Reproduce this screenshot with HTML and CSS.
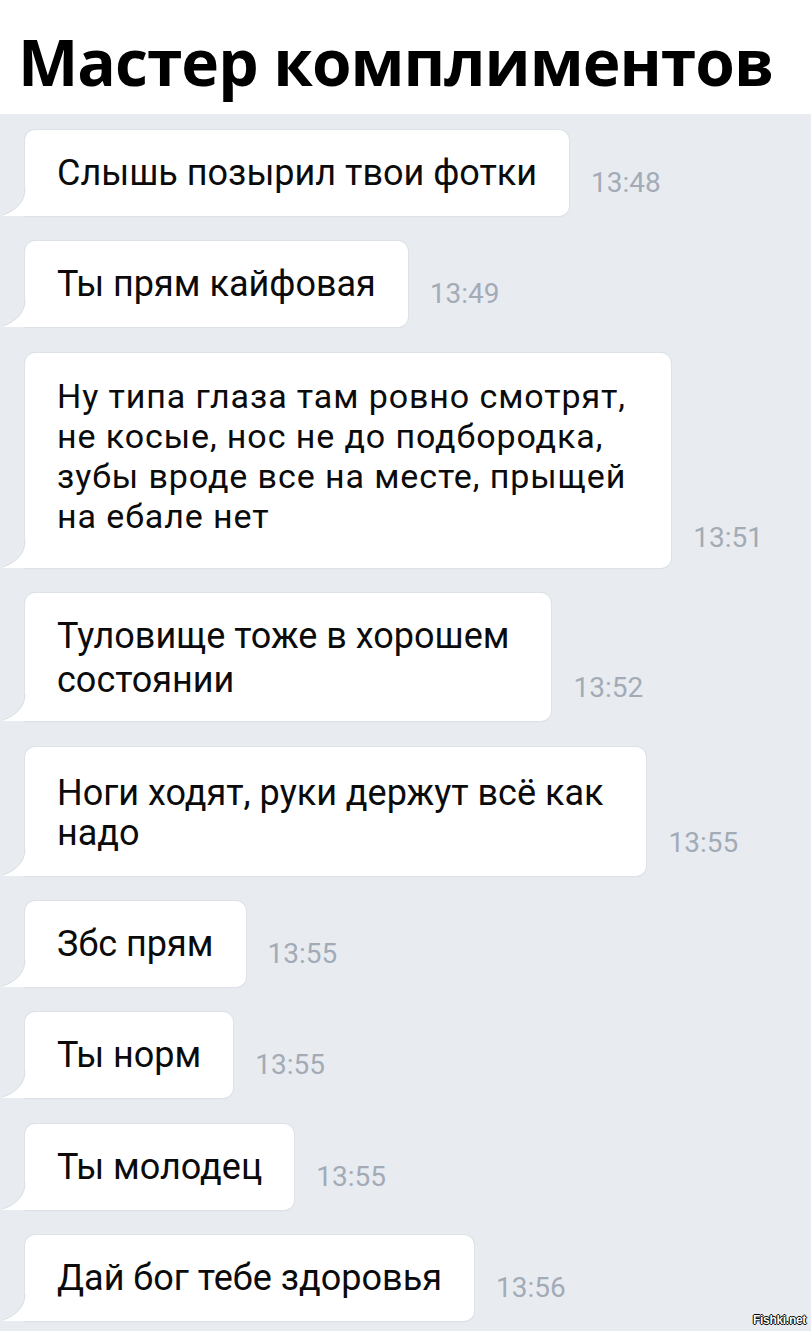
FILE: index.html
```html
<!DOCTYPE html>
<html lang="ru">
<head>
<meta charset="utf-8">
<title>Мастер комплиментов</title>
<link rel="stylesheet" href="styles.css">
</head>
<body>
<div class="page">
  <header class="header">
    <h1 class="title">Мастер комплиментов</h1>
  </header>
  <main class="chat">
    <div class="row">
      <div class="bubble">Слышь позырил твои фотки<svg class="tail" viewBox="0 0 24 27" width="24" height="27"><path class="tail-fill" d="M23 0 C23 12 15 21 1 26 L1 27 L24 27 L24 0 Z"/><path class="tail-line" d="M23 0 C23 12 15 21 1 26"/></svg></div>
      <span class="time">13:48</span>
    </div>
    <div class="row">
      <div class="bubble">Ты прям кайфовая<svg class="tail" viewBox="0 0 24 27" width="24" height="27"><path class="tail-fill" d="M23 0 C23 12 15 21 1 26 L1 27 L24 27 L24 0 Z"/><path class="tail-line" d="M23 0 C23 12 15 21 1 26"/></svg></div>
      <span class="time">13:49</span>
    </div>
    <div class="row">
      <div class="bubble bubble--four">Ну типа глаза там ровно смотрят,<br>не косые, нос не до подбородка,<br>зубы вроде все на месте, прыщей<br>на ебале нет<svg class="tail" viewBox="0 0 24 27" width="24" height="27"><path class="tail-fill" d="M23 0 C23 12 15 21 1 26 L1 27 L24 27 L24 0 Z"/><path class="tail-line" d="M23 0 C23 12 15 21 1 26"/></svg></div>
      <span class="time time--low">13:51</span>
    </div>
    <div class="row">
      <div class="bubble bubble--loose">Туловище тоже в хорошем<br>состоянии<svg class="tail" viewBox="0 0 24 27" width="24" height="27"><path class="tail-fill" d="M23 0 C23 12 15 21 1 26 L1 27 L24 27 L24 0 Z"/><path class="tail-line" d="M23 0 C23 12 15 21 1 26"/></svg></div>
      <span class="time">13:52</span>
    </div>
    <div class="row">
      <div class="bubble bubble--two">Ноги ходят, руки держут всё как<br>надо<svg class="tail" viewBox="0 0 24 27" width="24" height="27"><path class="tail-fill" d="M23 0 C23 12 15 21 1 26 L1 27 L24 27 L24 0 Z"/><path class="tail-line" d="M23 0 C23 12 15 21 1 26"/></svg></div>
      <span class="time">13:55</span>
    </div>
    <div class="row">
      <div class="bubble">Збс прям<svg class="tail" viewBox="0 0 24 27" width="24" height="27"><path class="tail-fill" d="M23 0 C23 12 15 21 1 26 L1 27 L24 27 L24 0 Z"/><path class="tail-line" d="M23 0 C23 12 15 21 1 26"/></svg></div>
      <span class="time">13:55</span>
    </div>
    <div class="row">
      <div class="bubble">Ты норм<svg class="tail" viewBox="0 0 24 27" width="24" height="27"><path class="tail-fill" d="M23 0 C23 12 15 21 1 26 L1 27 L24 27 L24 0 Z"/><path class="tail-line" d="M23 0 C23 12 15 21 1 26"/></svg></div>
      <span class="time">13:55</span>
    </div>
    <div class="row">
      <div class="bubble">Ты молодец<svg class="tail" viewBox="0 0 24 27" width="24" height="27"><path class="tail-fill" d="M23 0 C23 12 15 21 1 26 L1 27 L24 27 L24 0 Z"/><path class="tail-line" d="M23 0 C23 12 15 21 1 26"/></svg></div>
      <span class="time">13:55</span>
    </div>
    <div class="row">
      <div class="bubble">Дай бог тебе здоровья<svg class="tail" viewBox="0 0 24 27" width="24" height="27"><path class="tail-fill" d="M23 0 C23 12 15 21 1 26 L1 27 L24 27 L24 0 Z"/><path class="tail-line" d="M23 0 C23 12 15 21 1 26"/></svg></div>
      <span class="time">13:56</span>
    </div>
    <span class="watermark">Fishki.net</span>
  </main>
</div>
</body>
</html>
```
FILE: styles.css
```css
html, body {
  margin: 0;
  padding: 0;
  background: #e8ecf1;
}

.page {
  width: 811px;
  min-height: 1331px;
  display: flex;
  flex-direction: column;
}

.header {
  background: #ffffff;
  height: 114px;
  box-sizing: border-box;
  padding: 22px 0 0 18px;
}

.title {
  margin: 0;
  font-family: "Open Sans", "DejaVu Sans", sans-serif;
  font-weight: 700;
  font-size: 64px;
  line-height: 80px;
  letter-spacing: -1px;
  color: #000000;
  white-space: nowrap;
}

.chat {
  position: relative;
  flex: 1;
  background: #e8ecf1;
  padding: 16px 0 10px 25px;
  display: flex;
  flex-direction: column;
  gap: 25.4px;
}

.row {
  display: flex;
  align-items: flex-end;
  gap: 22px;
}

.bubble {
  position: relative;
  background: #ffffff;
  border-radius: 10px 10px 10px 0;
  box-shadow: 0 0 0 1px #dde2e8, 0 1px 1px #d3d9e0;
  padding: 23px 32px 23px 32px;
  font-family: Roboto, "Liberation Sans", sans-serif;
  font-size: 36px;
  line-height: 40px;
  color: #0b0b0b;
  white-space: nowrap;
}

.bubble--four {
  font-size: 34px;
  letter-spacing: 0.9px;
  line-height: 40px;
  padding: 23px 45px 32px 32px;
}

.bubble--loose {
  line-height: 44px;
  padding: 21px 42px 19px 32px;
}

.bubble--two {
  line-height: 40px;
  padding: 26px 43px 23px 32px;
}

.tail {
  position: absolute;
  left: -23px;
  bottom: 0;
  display: block;
}

.tail-fill {
  fill: #ffffff;
}

.tail-line {
  fill: none;
  stroke: #d9dee5;
  stroke-width: 1;
}

.time {
  font-family: Roboto, "Liberation Sans", sans-serif;
  font-size: 28px;
  line-height: 30px;
  color: #a3abb6;
  margin-bottom: 18px;
}

.time--low {
  margin-bottom: 15px;
}

.watermark {
  position: absolute;
  right: 5px;
  bottom: 4px;
  font-family: "Liberation Sans", Arial, sans-serif;
  font-weight: 700;
  font-size: 12px;
  line-height: 14px;
  letter-spacing: -0.3px;
  color: #ffffff;
  text-shadow: 1px 0 0 #000, -1px 0 0 #000, 0 1px 0 #000, 0 -1px 0 #000;
}
```
